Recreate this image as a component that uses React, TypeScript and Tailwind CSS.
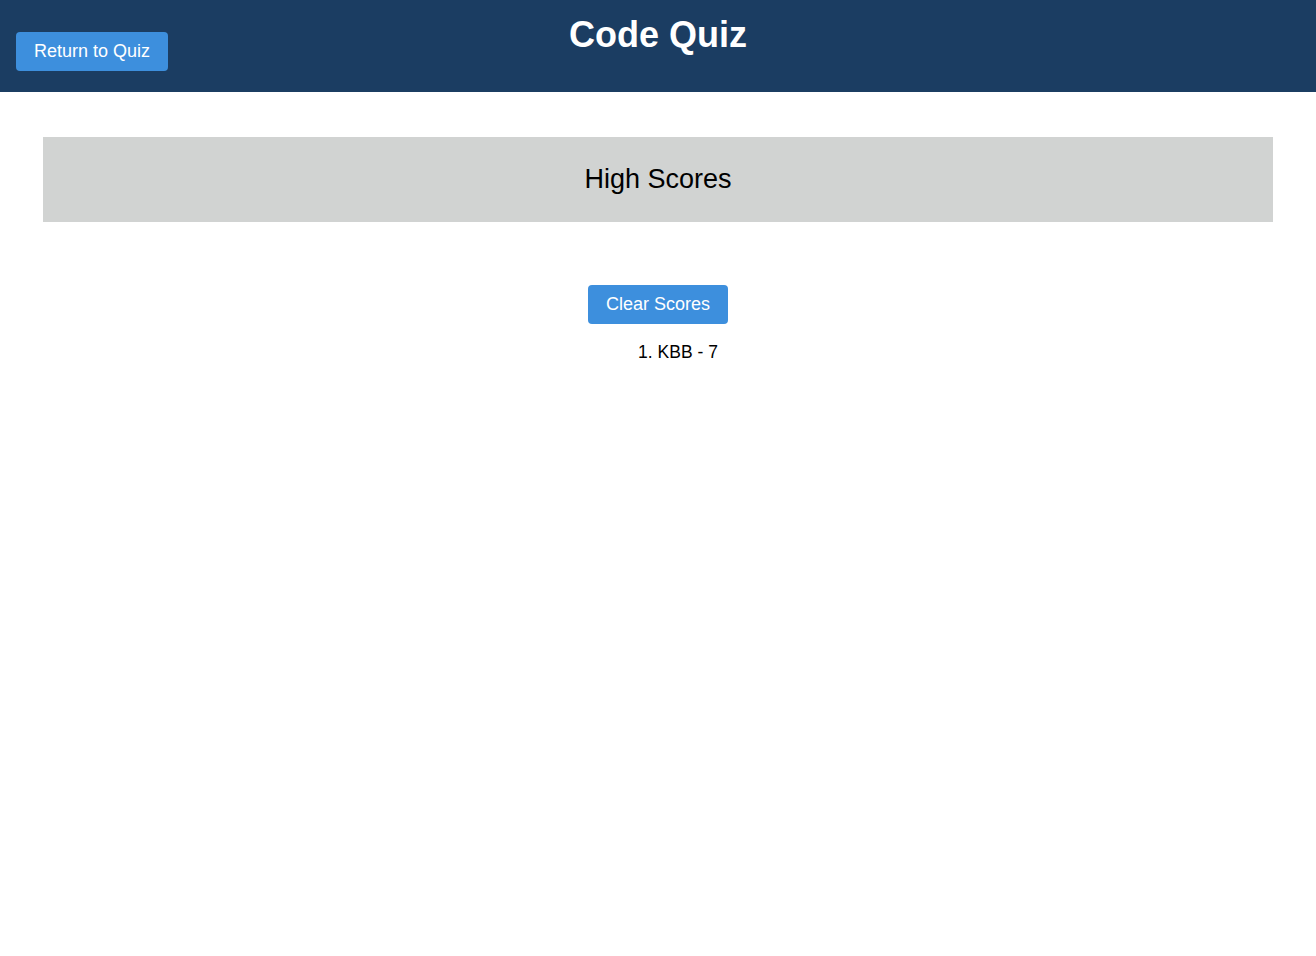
const scores = [{ initials: "KBB", score: 7 }];

const App = () => {
  return (
    <div className="min-h-screen bg-white font-['Liberation_Sans',Arial,sans-serif] text-black">
      <header className="grid h-[92px] grid-cols-[1fr_auto_1fr] bg-[#1b3d62]">
        <div className="pl-4 pt-8">
          <button className="h-[39px] rounded-[4px] bg-[#3d8fdd] px-[18px] text-[18px] text-white">
            Return to Quiz
          </button>
        </div>
        <h1 className="pt-[17px] text-[36px] font-bold leading-none text-white">Code Quiz</h1>
        <div />
      </header>

      <main className="px-[43px] pt-[45px]">
        <div className="flex h-[85px] items-center justify-center bg-[#d1d3d2]">
          <h2 className="text-[27px]">High Scores</h2>
        </div>

        <div className="mt-[63px] flex flex-col items-center">
          <button className="h-[39px] rounded-[4px] bg-[#3d8fdd] px-[18px] text-[18px] text-white">
            Clear Scores
          </button>
          <ol className="mt-[15px] list-inside list-decimal pl-10 text-center text-[17.5px]">
            {scores.map((s, i) => (
              <li key={i}>
                {s.initials} - {s.score}
              </li>
            ))}
          </ol>
        </div>
      </main>
    </div>
  );
};

export default App;
